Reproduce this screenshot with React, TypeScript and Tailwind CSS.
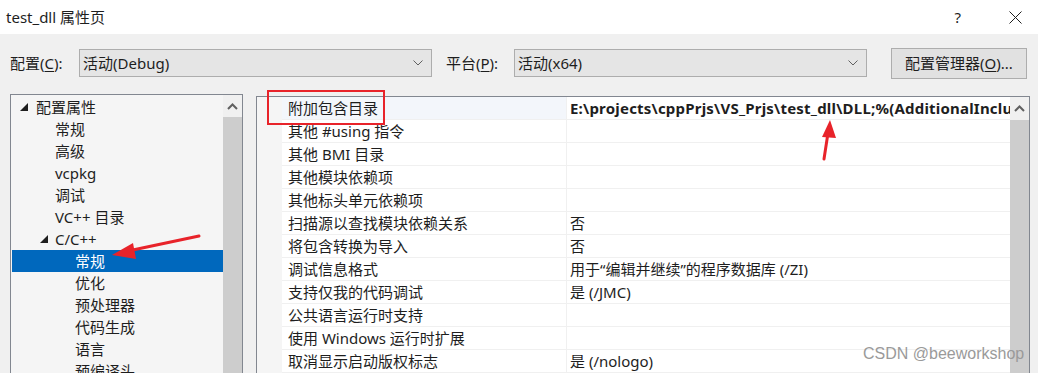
import React from "react";

const F = "font-['Noto_Sans','Noto_Sans_CJK_SC',sans-serif]";

const Chevron = () => (
  <svg width="10" height="6" viewBox="0 0 10 6" className="shrink-0">
    <path d="M0.5 0.5 L5 5 L9.5 0.5" fill="none" stroke="#606060" strokeWidth="1" />
  </svg>
);

const UpArrow = () => (
  <svg width="11" height="7" viewBox="0 0 11 7">
    <path d="M1 6 L5.5 1.5 L10 6" fill="none" stroke="#606060" strokeWidth="2" />
  </svg>
);

const Tri = () => (
  <svg width="8" height="8" viewBox="0 0 8 8" className="shrink-0">
    <path d="M8 0 L8 8 L0 8 Z" fill="#1e1e1e" />
  </svg>
);

const treeItems: { label: string; indent: number; tri?: boolean; sel?: boolean }[] = [
  { label: "配置属性", indent: 0, tri: true },
  { label: "常规", indent: 1 },
  { label: "高级", indent: 1 },
  { label: "vcpkg", indent: 1 },
  { label: "调试", indent: 1 },
  { label: "VC++ 目录", indent: 1 },
  { label: "C/C++", indent: 1, tri: true },
  { label: "常规", indent: 2, sel: true },
  { label: "优化", indent: 2 },
  { label: "预处理器", indent: 2 },
  { label: "代码生成", indent: 2 },
  { label: "语言", indent: 2 },
  { label: "预编译头", indent: 2 },
];

const rows: [string, string][] = [
  ["附加包含目录", "E:\\projects\\cppPrjs\\VS_Prjs\\test_dll\\DLL;%(AdditionalIncludeDirectories)"],
  ["其他 #using 指令", ""],
  ["其他 BMI 目录", ""],
  ["其他模块依赖项", ""],
  ["其他标头单元依赖项", ""],
  ["扫描源以查找模块依赖关系", "否"],
  ["将包含转换为导入", "否"],
  ["调试信息格式", "用于“编辑并继续”的程序数据库 (/ZI)"],
  ["支持仅我的代码调试", "是 (/JMC)"],
  ["公共语言运行时支持", ""],
  ["使用 Windows 运行时扩展", ""],
  ["取消显示启动版权标志", "是 (/nologo)"],
];

export default function App() {
  return (
    <div className={`relative w-[1038px] h-[373px] overflow-hidden bg-[#f0f0f0] text-[15px] text-[#1e1e1e] ${F}`}>
      {/* title bar */}
      <div className="h-[34px] bg-white flex items-center pl-[6px] pr-[16px]">
        <span className="leading-[20px] text-[15px]">test_dll 属性页</span>
        <div className="ml-auto flex items-center gap-[48px]">
          <span className="text-[15px] leading-[20px] text-[#1e1e1e]">?</span>
          <svg width="13" height="13" viewBox="0 0 13 13">
            <path d="M0.5 0.5 L12.5 12.5 M12.5 0.5 L0.5 12.5" stroke="#1e1e1e" strokeWidth="1" />
          </svg>
        </div>
      </div>

      {/* config row */}
      <div className="flex items-center h-[30px] mt-[14px] pl-[10px]">
        <span className="w-[69px] leading-[20px]">
          配置(<span className="underline underline-offset-2">C</span>):
        </span>
        <div className="w-[353px] h-[28px] border border-[#adadad] bg-[#e5e5e5] flex items-center pl-[3px] pr-[8px]">
          <span className="flex-1 leading-[20px]">活动(Debug)</span>
          <Chevron />
        </div>
        <span className="w-[68px] ml-[14px] leading-[20px]">
          平台(<span className="underline underline-offset-2">P</span>):
        </span>
        <div className="w-[353px] h-[28px] border border-[#adadad] bg-[#e5e5e5] flex items-center pl-[3px] pr-[8px]">
          <span className="flex-1 leading-[20px]">活动(x64)</span>
          <Chevron />
        </div>
        <div className="ml-[24px] w-[136px] h-[31px] border border-[#adadad] bg-[#e1e1e1] flex items-center justify-center">
          <span className="leading-[20px]">
            配置管理器(<span className="underline underline-offset-2">O</span>)...
          </span>
        </div>
      </div>

      {/* main area */}
      <div className="flex items-start mt-[16px] pl-[10px]">
        {/* tree */}
        <div className="w-[233px] h-[300px] shrink-0 border border-[#828790] bg-[#f5f5f5] flex">
          <div className="flex-1 min-w-0 pt-[1px] pl-[1px]">
            {treeItems.map((t, i) => (
              <div
                key={i}
                className={`h-[22px] flex items-center ${t.sel ? "bg-[#0068bd] text-white" : ""}`}
              >
                <div
                  className={
                    t.indent === 0
                      ? "w-[24px] shrink-0 pl-[8px] flex"
                      : t.indent === 1
                      ? "w-[43px] shrink-0 flex pl-[28px]"
                      : "w-[63px] shrink-0"
                  }
                >
                  {t.tri && <Tri />}
                </div>
                <span className="leading-[20px] whitespace-nowrap">{t.label}</span>
              </div>
            ))}
          </div>
          <div className="w-[19px] shrink-0 flex flex-col bg-[#f0f0f0]">
            <div className="h-[22px] flex items-center justify-center">
              <UpArrow />
            </div>
            <div className="flex-1 bg-[#cdcdcd]" />
          </div>
        </div>

        {/* grid */}
        <div className="ml-[13px] mt-[2px] w-[774px] h-[300px] shrink-0 border border-[#828790] bg-white flex overflow-hidden">
          <div className="w-[25px] shrink-0 bg-[#f5f5f5]" />
          <div className="flex-1 min-w-0 flex flex-col">
            {rows.map(([n, v], i) => (
              <div
                key={i}
                className={`h-[23px] shrink-0 flex border-b border-[#f0f0f0] ${i === 0 ? "bg-[#f3f6fb]" : ""}`}
              >
                <div className="w-[285px] shrink-0 pl-[6px] flex items-center border-r border-[#f0f0f0]">
                  <span className="leading-[20px] whitespace-nowrap">{n}</span>
                </div>
                <div className={`flex-1 min-w-0 pl-[3px] flex items-center overflow-hidden ${i === 0 ? "bg-white" : ""}`}>
                  <span
                    className={`leading-[20px] whitespace-nowrap ${i === 0 ? "font-bold tracking-[0.2px]" : ""}`}
                  >
                    {v}
                  </span>
                </div>
              </div>
            ))}
          </div>
          <div className="w-[19px] shrink-0 flex flex-col bg-[#f0f0f0]">
            <div className="h-[23px] flex items-center justify-center">
              <UpArrow />
            </div>
            <div className="flex-1 bg-[#cdcdcd]" />
          </div>
        </div>
      </div>

      {/* annotations */}
      <div className="absolute left-[267px] top-[90px] w-[118px] h-[35px] border-2 border-[#e8232a]" />
      <svg className="absolute left-0 top-0 pointer-events-none" width="1038" height="373">
        <line x1="199" y1="236" x2="128" y2="251" stroke="#e8232a" strokeWidth="3" strokeLinecap="round" />
        <path d="M112 255 L133 243 L136 259 Z" fill="#e8232a" />
        <line x1="824" y1="159" x2="828" y2="133" stroke="#e8232a" strokeWidth="3" strokeLinecap="round" />
        <path d="M830 120 L822 137 L836 138 Z" fill="#e8232a" />
      </svg>
      <div className="absolute left-[863px] top-[344px] text-[16px] leading-[20px] text-[#9a9a9a] font-['Liberation_Sans',sans-serif]">
        CSDN @beeworkshop
      </div>
    </div>
  );
}
